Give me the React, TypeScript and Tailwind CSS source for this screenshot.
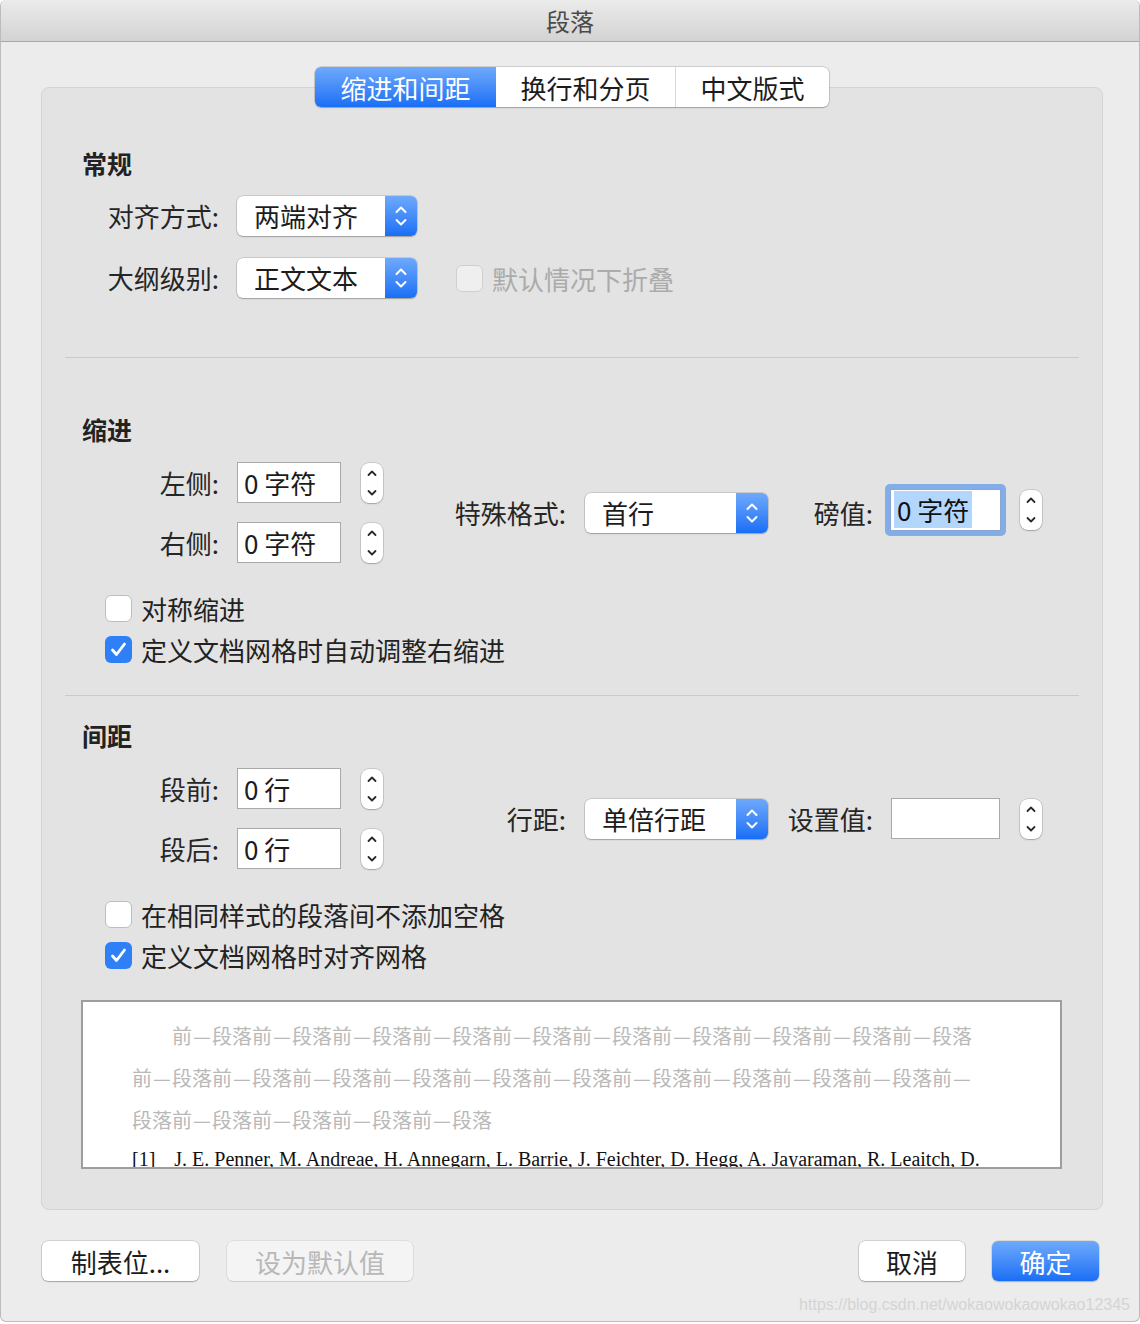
import React, { FC } from 'react';

const font = "font-['Noto_Sans_CJK_SC',sans-serif]";

const PopArrows: FC = () => (
  <svg width="14" height="26" viewBox="0 0 14 26" fill="none">
    <path d="M2.5 9 L7 4.5 L11.5 9" stroke="#fff" strokeWidth="2" strokeLinecap="round" strokeLinejoin="round" />
    <path d="M2.5 17 L7 21.5 L11.5 17" stroke="#fff" strokeWidth="2" strokeLinecap="round" strokeLinejoin="round" />
  </svg>
);

const Popup: FC<{ value: string; width: number }> = ({ value, width }) => (
  <div
    className="flex h-[40px] rounded-[6px] bg-white shadow-[0_0_0_0.5px_rgba(0,0,0,0.22),0_1px_1.5px_rgba(0,0,0,0.22)]"
    style={{ width }}
  >
    <span className="flex-1 pl-[17px] text-[26px] leading-[40px] text-[#1c1c1c]">{value}</span>
    <span className="flex w-[32px] items-center justify-center rounded-r-[6px] bg-linear-to-b from-[#6ea9fb] to-[#176ef6]">
      <PopArrows />
    </span>
  </div>
);

const Stepper: FC = () => (
  <div className="flex h-[40px] w-[22px] items-center justify-center rounded-[8px] bg-white shadow-[0_0_0_0.5px_rgba(0,0,0,0.22),0_1px_1.5px_rgba(0,0,0,0.2)]">
    <svg width="12" height="32" viewBox="0 0 12 32" fill="none">
      <path d="M2.5 8 L6 4.5 L9.5 8" stroke="#2a2a2a" strokeWidth="1.8" strokeLinecap="round" strokeLinejoin="round" />
      <path d="M2.5 24 L6 27.5 L9.5 24" stroke="#2a2a2a" strokeWidth="1.8" strokeLinecap="round" strokeLinejoin="round" />
    </svg>
  </div>
);

const Field: FC<{ value?: string; width: number }> = ({ value, width }) => (
  <div
    className="h-[41px] border border-[#a9a9a9] bg-white pl-[6px] text-[26px] leading-[39px] text-[#1c1c1c]"
    style={{ width }}
  >
    {value}
  </div>
);

const Check: FC<{ checked?: boolean; disabled?: boolean; label: string }> = ({ checked, disabled, label }) => (
  <div className="flex h-[34px] items-center">
    {checked ? (
      <span className="flex h-[27px] w-[27px] items-center justify-center rounded-[6px] bg-[#2f80f7]">
        <svg width="27" height="27" viewBox="0 0 27 27" fill="none">
          <path d="M7.5 14 L11.5 18.5 L19.5 8" stroke="#fff" strokeWidth="2.8" strokeLinecap="round" strokeLinejoin="round" />
        </svg>
      </span>
    ) : (
      <span
        className={
          disabled
            ? 'h-[27px] w-[27px] rounded-[6px] border border-[#cfcfcf] bg-[#efefef]'
            : 'h-[27px] w-[27px] rounded-[6px] border border-[#bdbdbd] bg-white'
        }
      />
    )}
    <span className={disabled ? 'ml-[9px] text-[26px] text-[#ababab]' : 'ml-[9px] text-[26px] text-[#222]'}>{label}</span>
  </div>
);

const Label: FC<{ text: string; width: number }> = ({ text, width }) => (
  <span className="shrink-0 text-right text-[26px] leading-[40px] text-[#262626]" style={{ width }}>
    {text}
  </span>
);

const Heading: FC<{ text: string }> = ({ text }) => (
  <div className="ml-[17px] text-[25px] font-bold leading-[36px] text-[#222]">{text}</div>
);

const Sep: FC = () => <div className="h-px w-[1014px] bg-[#cacaca]" />;

const StepRow: FC<{ label: string; value: string }> = ({ label, value }) => (
  <div className="flex h-[41px] items-center">
    <Label text={label} width={154} />
    <div className="ml-[18px]">
      <Field value={value} width={104} />
    </div>
    <div className="ml-[20px]">
      <Stepper />
    </div>
  </div>
);

// preview filler text; the dash is set one full character wide
const Dash: FC = () => <span className="inline-block w-[20px] text-center">—</span>;

const Filler: FC<{ lead?: boolean; count: number; tail?: boolean }> = ({ lead, count, tail }) => (
  <>
    {lead && '段落'}
    {Array.from({ length: count }).map((_, i) => (
      <React.Fragment key={i}>
        前<Dash />段落
      </React.Fragment>
    ))}
    {tail && (
      <>
        前<Dash />
      </>
    )}
  </>
);

const BtnBase = 'flex h-[40px] items-center justify-center rounded-[6px] text-[26px]';

const App: FC = () => {
  return (
    <div className={`${font} h-[1324px] w-[1140px] bg-white`}>
      <div className="flex h-[1322px] flex-col overflow-hidden rounded-[6px] border-x border-b border-[#bcbcbc] bg-[#ececec]">
        {/* title bar */}
        <div className="flex h-[42px] shrink-0 items-center justify-center border-b border-[#a8a8a8] bg-linear-to-b from-[#ebebeb] to-[#d3d3d3]">
          <span className="text-[24px] leading-[30px] text-[#4a4a4a]">段落</span>
        </div>

        {/* tabs */}
        <div className="relative z-10 ml-[314px] mt-[25px] flex h-[40px] w-[514px] overflow-hidden rounded-[6px] bg-white shadow-[0_0_0_0.5px_rgba(0,0,0,0.25),0_1px_1.5px_rgba(0,0,0,0.2)]">
          <div className="flex w-[181px] items-center justify-center bg-linear-to-b from-[#6ea9fb] to-[#176ef6] text-[26px] text-white">
            缩进和间距
          </div>
          <div className="flex w-[180px] items-center justify-center border-r border-[#d8d8d8] text-[26px] text-[#1c1c1c]">
            换行和分页
          </div>
          <div className="flex flex-1 items-center justify-center text-[26px] text-[#1c1c1c]">中文版式</div>
        </div>

        {/* tab panel */}
        <div className="-mt-[20px] ml-[40px] w-[1062px] rounded-[8px] border border-[#d3d3d3] bg-[#e3e3e3] pb-[40px] pl-[23px] pt-[57px]">
          <Heading text="常规" />
          <div className="mt-[15px] flex flex-col gap-[22px]">
            <div className="flex h-[40px] items-center">
              <Label text="对齐方式:" width={154} />
              <div className="ml-[18px]">
                <Popup value="两端对齐" width={180} />
              </div>
            </div>
            <div className="flex h-[40px] items-center">
              <Label text="大纲级别:" width={154} />
              <div className="ml-[18px]">
                <Popup value="正文文本" width={180} />
              </div>
              <div className="ml-[39px]">
                <Check disabled label="默认情况下折叠" />
              </div>
            </div>
          </div>

          <div className="mt-[59px]">
            <Sep />
          </div>

          <div className="mt-[53px]">
            <Heading text="缩进" />
          </div>
          <div className="mt-[15px] flex items-center">
            <div className="flex flex-col gap-[19px]">
              <StepRow label="左侧:" value="0 字符" />
              <StepRow label="右侧:" value="0 字符" />
            </div>
            <Label text="特殊格式:" width={183} />
            <div className="ml-[19px]">
              <Popup value="首行" width={183} />
            </div>
            <Label text="磅值:" width={105} />
            <div className="ml-[12px] mt-[-6px] rounded-[5px] bg-[#82ade9] p-[5px]">
              <div className="h-[42px] w-[111px] border border-[#8aa6cf] bg-white pl-[3px] text-[26px] leading-[40px] text-[#111]">
                <span className="bg-[#b3d6fd] px-[3px]">0 字符</span>
              </div>
            </div>
            <div className="ml-[14px] mt-[-6px]">
              <Stepper />
            </div>
          </div>

          <div className="ml-[40px] mt-[28px] flex flex-col gap-[7px]">
            <Check label="对称缩进" />
            <Check checked label="定义文档网格时自动调整右缩进" />
          </div>

          <div className="mt-[29px]">
            <Sep />
          </div>

          <div className="mt-[21px]">
            <Heading text="间距" />
          </div>
          <div className="mt-[15px] flex items-center">
            <div className="flex flex-col gap-[19px]">
              <StepRow label="段前:" value="0 行" />
              <StepRow label="段后:" value="0 行" />
            </div>
            <Label text="行距:" width={183} />
            <div className="ml-[19px]">
              <Popup value="单倍行距" width={183} />
            </div>
            <Label text="设置值:" width={105} />
            <div className="ml-[18px]">
              <Field width={109} />
            </div>
            <div className="ml-[20px]">
              <Stepper />
            </div>
          </div>

          <div className="ml-[40px] mt-[28px] flex flex-col gap-[7px]">
            <Check label="在相同样式的段落间不添加空格" />
            <Check checked label="定义文档网格时对齐网格" />
          </div>

          {/* preview */}
          <div className="ml-[16px] mt-[28px] h-[169px] w-[981px] overflow-hidden border-2 border-[#9e9e9e] bg-white pl-[49px] pt-[13px]">
            <div className="whitespace-nowrap text-[20px] leading-[42px] text-[#b9b9b9]">
              <div className="pl-[40px]">
                <Filler count={10} />
              </div>
              <div>
                <Filler count={10} tail />
              </div>
              <div>
                <Filler lead count={4} />
              </div>
            </div>
            <div className="mt-[6px] whitespace-nowrap font-['Liberation_Serif',serif] text-[20px] leading-[24px] text-[#111]">
              <span>[1]</span>
              <span className="ml-[19px]">
                J. E. Penner, M. Andreae, H. Annegarn, L. Barrie, J. Feichter, D. Hegg, A. Jayaraman, R. Leaitch, D.
              </span>
            </div>
          </div>
        </div>

        {/* bottom buttons */}
        <div className="mt-[31px] flex px-[40px]">
          <div className="ml-px flex gap-[28px]">
            <div className={`${BtnBase} w-[157px] bg-white text-[#1c1c1c] shadow-[0_0_0_0.5px_rgba(0,0,0,0.22),0_1px_1.5px_rgba(0,0,0,0.22)]`}>
              制表位...
            </div>
            <div className={`${BtnBase} w-[186px] bg-[#f4f4f4] text-[#b8b8b8] shadow-[0_0_0_0.5px_rgba(0,0,0,0.12),0_1px_1px_rgba(0,0,0,0.08)]`}>
              设为默认值
            </div>
          </div>
          <div className="ml-auto flex gap-[27px]">
            <div className={`${BtnBase} w-[106px] bg-white text-[#1c1c1c] shadow-[0_0_0_0.5px_rgba(0,0,0,0.22),0_1px_1.5px_rgba(0,0,0,0.22)]`}>
              取消
            </div>
            <div className={`${BtnBase} w-[107px] bg-linear-to-b from-[#6ea9fb] to-[#176ef6] text-white shadow-[0_0_0_0.5px_rgba(0,0,0,0.15),0_1px_1.5px_rgba(0,0,0,0.2)]`}>
              确定
            </div>
          </div>
        </div>

        <div className="mt-[14px] pr-[9px] text-right font-['Liberation_Sans',sans-serif] text-[16px] leading-[20px] text-[#d4d4d4]">
          https://blog.csdn.net/wokaowokaowokao12345
        </div>
      </div>
    </div>
  );
};

export default App;
